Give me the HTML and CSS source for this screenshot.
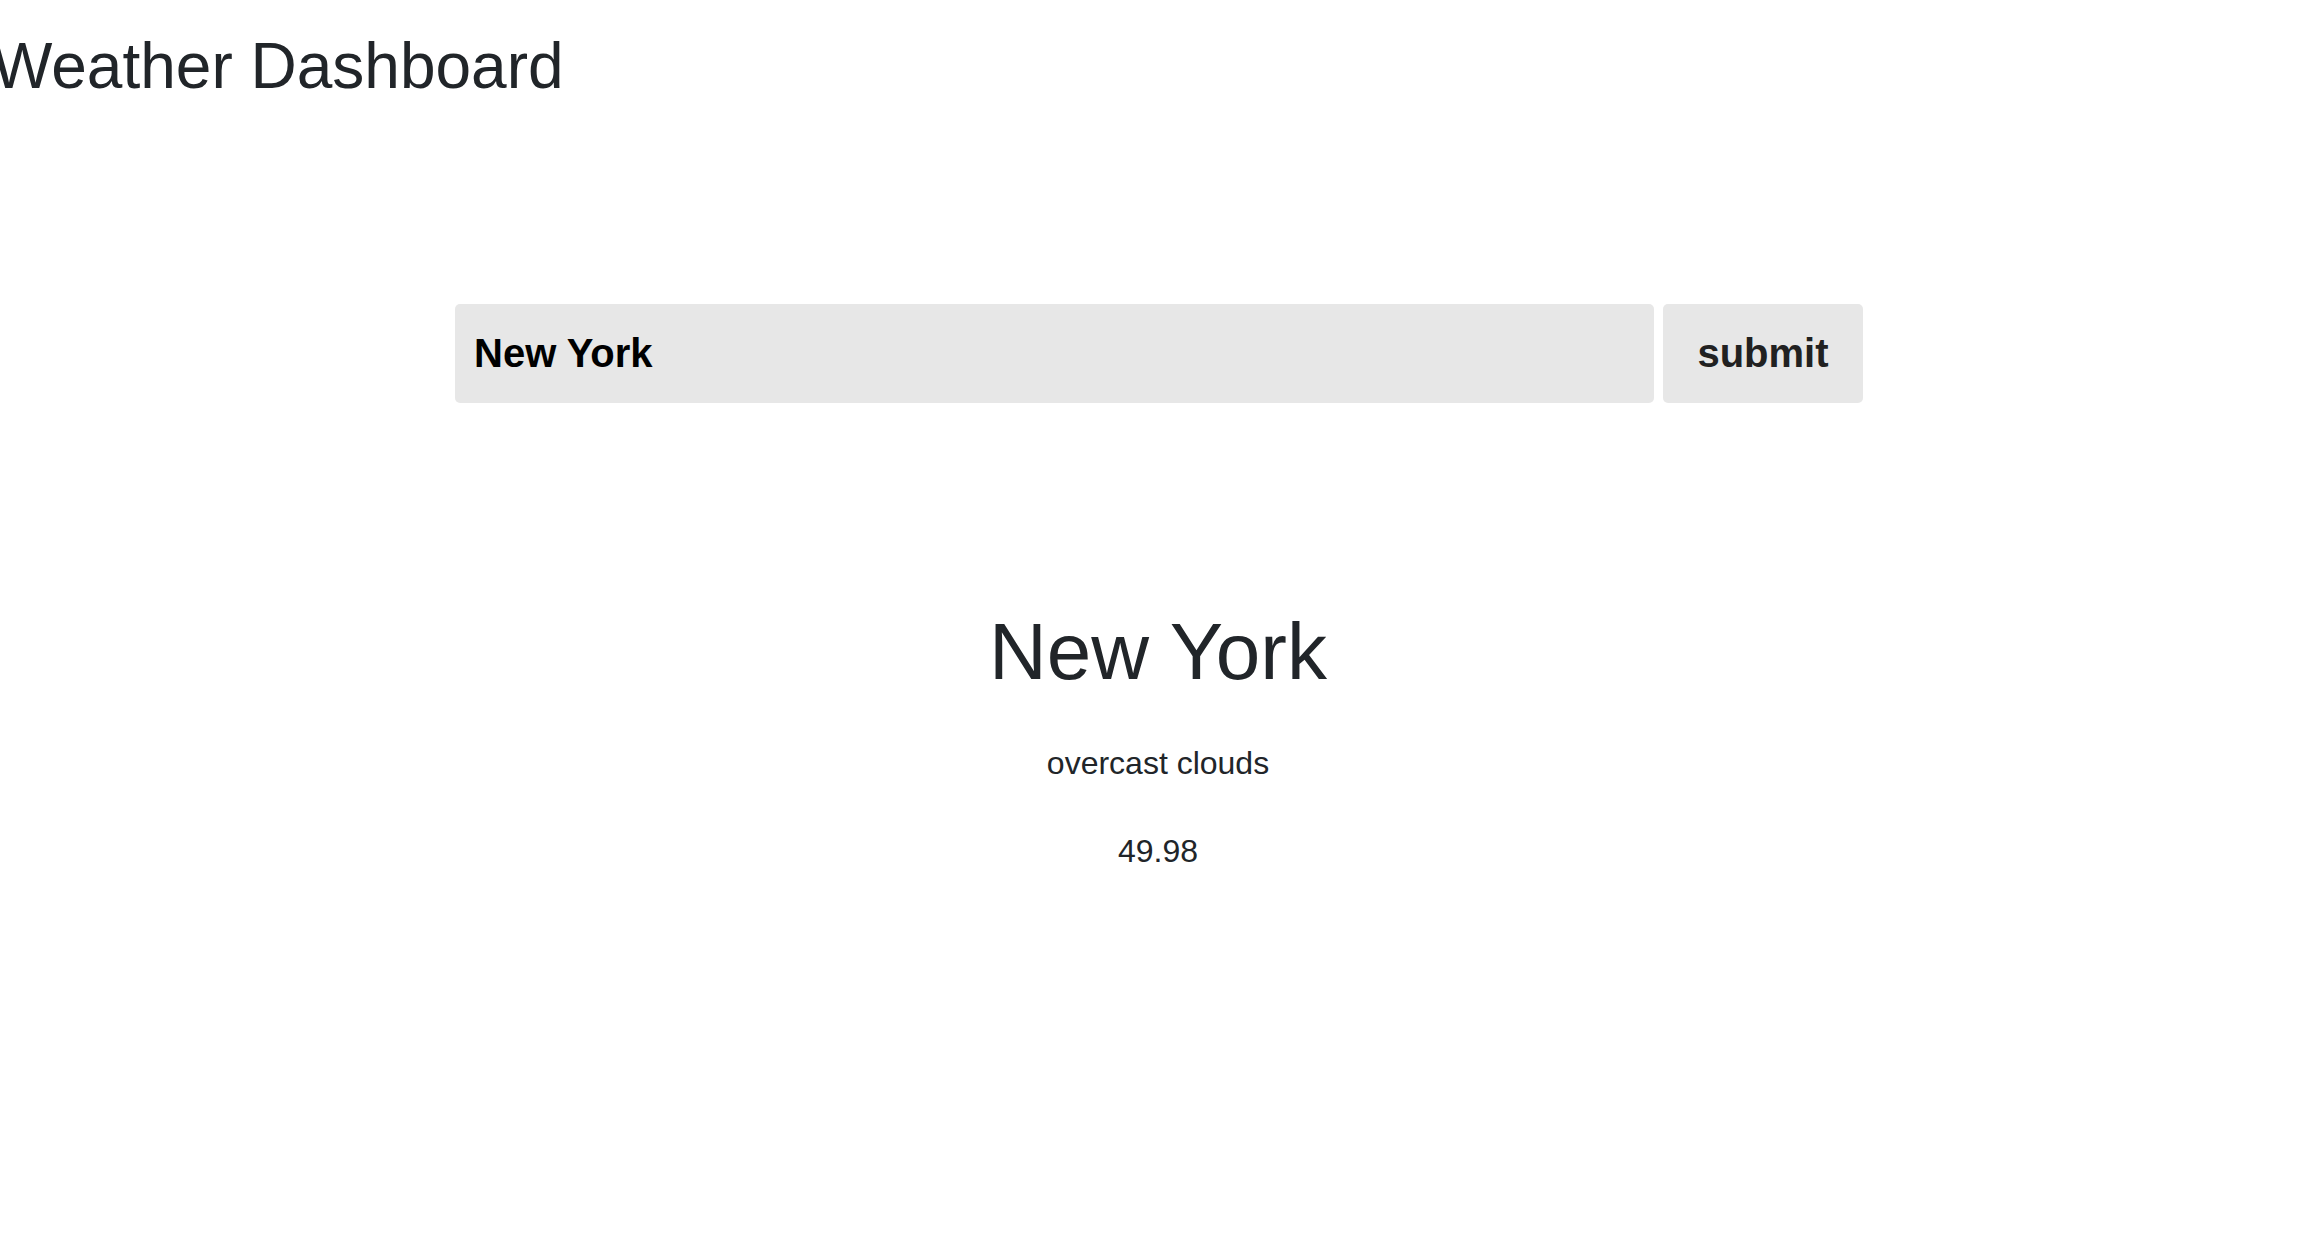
FILE: index.html
```html
<!DOCTYPE html>
<html lang="en">
<head>
<meta charset="utf-8">
<title>Weather Dashboard</title>
<link rel="stylesheet" href="styles.css">
</head>
<body>
  <h1 class="app-title">Weather Dashboard</h1>
  <form class="search-form" onsubmit="return false;">
    <input class="search-input" type="text" value="New York">
    <button class="search-button" type="submit">submit</button>
  </form>
  <section class="result">
    <h2 class="result-city">New York</h2>
    <p class="result-desc">overcast clouds</p>
    <p class="result-temp">49.98</p>
  </section>
</body>
</html>
```
FILE: styles.css
```css
html, body {
  margin: 0;
  padding: 0;
  background: #ffffff;
}

body {
  font-family: "Liberation Sans", Arial, Helvetica, sans-serif;
  color: #212529;
  overflow: hidden;
}

.app-title {
  margin: 0 0 0 -8px;
  padding-top: 34px;
  font-size: 64px;
  line-height: 64px;
  font-weight: 400;
  color: #212529;
}

.search-form {
  display: flex;
  gap: 9px;
  width: 1408px;
  margin: 206px 0 0 455px;
  height: 99px;
}

.search-input {
  flex: 1;
  min-width: 0;
  height: 99px;
  box-sizing: border-box;
  border: none;
  border-radius: 5px;
  background: #e7e7e7;
  padding: 0 19px;
  font-family: "Liberation Sans", Arial, Helvetica, sans-serif;
  font-size: 40px;
  font-weight: 700;
  color: #000000;
  outline: none;
}

.search-button {
  width: 200px;
  height: 99px;
  box-sizing: border-box;
  border: none;
  border-radius: 5px;
  background: #e7e7e7;
  padding: 0;
  font-family: "Liberation Sans", Arial, Helvetica, sans-serif;
  font-size: 40px;
  font-weight: 700;
  color: #212121;
}

.result {
  text-align: center;
  margin-top: 209px;
  padding-right: 6px;
}

.result-city {
  margin: 0;
  font-size: 80px;
  line-height: 80px;
  font-weight: 400;
  color: #212529;
}

.result-desc {
  margin: 55px 0 0;
  font-size: 32px;
  line-height: 32px;
}

.result-temp {
  margin: 56px 0 0;
  font-size: 32px;
  line-height: 32px;
}
```
